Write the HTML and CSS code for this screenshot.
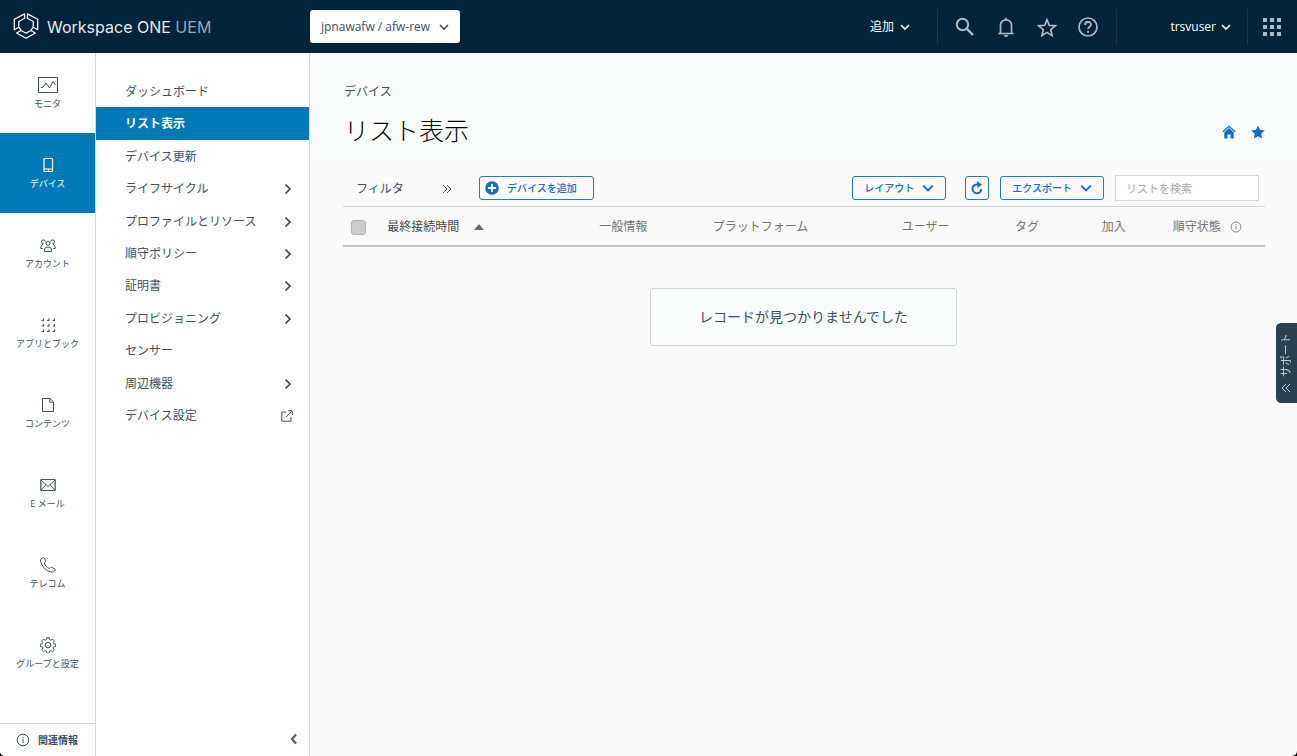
FILE: index.html
```html
<!DOCTYPE html>
<html lang="ja">
<head>
<meta charset="utf-8">
<meta name="viewport" content="width=device-width, initial-scale=1">
<title>Workspace ONE UEM</title>
<link rel="stylesheet" href="styles.css">
</head>
<body>
<svg class="defs" aria-hidden="true">
  <symbol id="down" viewBox="0 0 10 10"><path d="M1 3l4 4 4-4" fill="none" stroke="currentColor" stroke-width="1.6"/></symbol>
  <symbol id="right" viewBox="0 0 10 12"><path d="M2.5 1.5L7 6l-4.500 4.500" fill="none" stroke="currentColor" stroke-width="1.600"/></symbol>
  <symbol id="info" viewBox="0 0 14 14"><g fill="none" stroke="currentColor"><circle cx="7" cy="7" r="5.800"/><path d="M7 6v4M7 4v1.100"/></g></symbol>
</svg>
<div class="app">
  <header class="topbar">
    <a class="brand" href="#">
      <svg class="brand-mark" viewBox="0 0 26 28" fill="none" stroke="currentColor" stroke-width="1.200" stroke-linejoin="round">
        <path d="M11.600.9L1.300 6.300v10.500l4.500-2.600V8.600l5.800-3.400zM14.400.9l10.300 5.400v10.500l-4.500-2.600V8.600l-5.800-3.400z"/>
        <path d="M3.600 20l4.600-2.600L13 20.200l4.800-2.800 4.600 2.600L13 25.300zM5.800 14.200l2.400 3.200M20.200 14.200l-2.400 3.200"/>
      </svg>
      <span class="brand-name">Workspace ONE <span class="brand-product">UEM</span></span>
    </a>
    <button class="org" type="button" aria-haspopup="true">jpnawafw / afw-rew <svg class="caret"><use href="#down"/></svg></button>
    <div class="top-actions">
      <button class="top-menu add" type="button" aria-haspopup="true">追加 <svg class="caret"><use href="#down"/></svg></button>
      <div class="top-icons">
        <button type="button" aria-label="検索"><svg viewBox="0 0 20 20" fill="none" stroke="currentColor" stroke-width="2"><circle cx="7.500" cy="7.500" r="5.700"/><path d="M11.700 11.700l6.300 6.300" stroke-width="2.400"/></svg></button>
        <button type="button" aria-label="通知"><svg viewBox="0 0 20 20" fill="none" stroke="currentColor" stroke-width="1.700"><path d="M2.300 16.500h15.400M4.500 16V8.500C4.500 5 7 2.800 10 2.800s5.500 2.200 5.500 5.700V16M10 .8v2"/><path d="M8.500 18a1.600 1.600 0 0 0 3 0" fill="currentColor"/></svg></button>
        <button type="button" aria-label="お気に入り"><svg viewBox="0 0 20 20" fill="none" stroke="currentColor" stroke-width="1.700"><path d="M10 2.700l2.300 5.600 6 .5-4.600 3.900 1.400 5.900-5.100-3.200-5.100 3.200 1.400-5.900-4.600-3.900 6-.5z"/></svg></button>
        <button type="button" aria-label="ヘルプ"><svg viewBox="0 0 20 20" fill="none" stroke="currentColor" stroke-width="1.700"><circle cx="10" cy="10" r="9"/><path d="M7 8c0-4 6-3.900 6-.4 0 2.100-2.900 2.200-2.900 4.400M10.100 13.800v2" stroke-width="1.800"/></svg></button>
      </div>
      <button class="top-menu user" type="button" aria-haspopup="true">trsvuser <svg class="caret"><use href="#down"/></svg></button>
      <button class="apps" type="button" aria-label="アプリ一覧"><svg viewBox="0 0 18 18" fill="currentColor"><path d="M0 0h4v4H0zM7 0h4v4H7zM14 0h4v4h-4zM0 7h4v4H0zM7 7h4v4H7zM14 7h4v4h-4zM0 14h4v4H0zM7 14h4v4H7zM14 14h4v4h-4z"/></svg></button>
    </div>
  </header>
  <div class="body">
    <nav class="rail" aria-label="メイン">
      <a class="rail-item" href="#"><svg class="wide" viewBox="0 0 20 16" fill="none" stroke="currentColor"><rect x=".5" y=".5" width="19" height="15" rx=".8" stroke-width="1.200"/><path d="M3 10.500h1.800L8 6l3.500 5L15 4.500l2.500 3.500"/></svg>モニタ</a>
      <a class="rail-item active" href="#" aria-current="true"><svg viewBox="0 0 16 16" fill="none" stroke="currentColor"><rect x="4" y="1.500" width="8.500" height="13" rx=".8" stroke-width="1.200"/><path d="M4 12h8.500M8.250 12v2"/></svg>デバイス</a>
      <a class="rail-item" href="#"><svg viewBox="0 0 16 16" fill="none" stroke="currentColor"><circle cx="8" cy="6.500" r="2"/><path d="M4.500 14.500v-2.300C4.500 9.400 11.500 9.400 11.500 12.200v2.300zM5.300 4.500A1.900 1.900 0 1 0 3.800 6.700M10.700 4.500a1.900 1.900 0 1 1 1.500 2.200M3 7.500C1.300 8 .8 9 .8 11.500h2M13 7.500c1.700.5 2.200 1.500 2.200 4h-2"/></svg>アカウント</a>
      <a class="rail-item" href="#"><svg viewBox="0 0 16 16" fill="none" stroke="currentColor" stroke-width="1.200"><path d="M1.500 3.500h2v-2M7 3.500h2v-2M12.500 3.500h2v-2M1.500 9h2V7M7 9h2V7M12.500 9h2V7M1.500 14.500h2v-2M7 14.500h2v-2M12.500 14.500h2v-2"/></svg>アプリとブック</a>
      <a class="rail-item" href="#"><svg viewBox="0 0 16 16" fill="none" stroke="currentColor" stroke-linejoin="round"><path d="M2.500 1.500h7.700l3.300 3.300v9.700h-11zM9.800 1.500v3.700h3.700"/></svg>コンテンツ</a>
      <a class="rail-item" href="#"><svg viewBox="0 0 16 16" fill="none" stroke="currentColor"><rect x=".8" y="2.500" width="14.400" height="11" rx=".5" stroke-width="1.200"/><path d="M1 3l7 6.500L15 3M1 13l4.800-5M15 13l-4.800-5"/></svg>E メール</a>
      <a class="rail-item" href="#"><svg viewBox="0 0 16 16" fill="none" stroke="currentColor" stroke-linejoin="round"><path d="M1 1.800L3 .7c.5-.2 1 0 1.200.4l1.300 2.700c.2.500.1 1-.3 1.300l-1 .9c.6 2.300 2.800 4.700 5.300 5.500l1-1c.4-.4.800-.4 1.300-.2l2.800 1.500c.6.300.6.800.4 1.200-.7 1.700-2.200 2.400-4 2C5.500 13.700 1.500 9 .6 4.200.5 3.200.4 2.300 1 1.800z"/></svg>テレコム</a>
      <a class="rail-item" href="#"><svg viewBox="0 0 16 16" fill="none" stroke="currentColor" stroke-linejoin="round"><circle cx="8" cy="8" r="2.800"/><path d="M6.800.7h2.400l.5 2 1.100.5 1.800-1.100 1.700 1.700-1.100 1.800.5 1.100 1.900.5v2.400l-1.900.5-.5 1.100 1.100 1.800-1.700 1.700-1.800-1.100-1.100.5-.5 1.900H6.800l-.5-1.900-1.100-.5-1.800 1.100-1.700-1.700 1.100-1.800-.5-1.100-1.900-.5V7.200l1.900-.5.500-1.100-1.100-1.800 1.700-1.700 1.800 1.100 1.100-.5z"/></svg>グループと設定</a>
      <a class="about" href="#"><svg><use href="#info"/></svg>関連情報</a>
    </nav>
    <nav class="subnav" aria-label="デバイス">
      <ul class="subnav-list">
        <li><a href="#">ダッシュボード</a></li>
        <li><a class="current" href="#" aria-current="page">リスト表示</a></li>
        <li><a href="#">デバイス更新</a></li>
        <li><a href="#">ライフサイクル<svg class="arrow"><use href="#right"/></svg></a></li>
        <li><a href="#">プロファイルとリソース<svg class="arrow"><use href="#right"/></svg></a></li>
        <li><a href="#">順守ポリシー<svg class="arrow"><use href="#right"/></svg></a></li>
        <li><a href="#">証明書<svg class="arrow"><use href="#right"/></svg></a></li>
        <li><a href="#">プロビジョニング<svg class="arrow"><use href="#right"/></svg></a></li>
        <li><a href="#">センサー</a></li>
        <li><a href="#">周辺機器<svg class="arrow"><use href="#right"/></svg></a></li>
        <li><a href="#">デバイス設定<svg class="external" viewBox="0 0 12 12" fill="none" stroke="currentColor"><path d="M5 2H.8v9.200H10V7M7 .8h4.200V5M11 1L5 7"/></svg></a></li>
      </ul>
      <button class="collapse" type="button" aria-label="メニューを閉じる"><svg viewBox="0 0 8 12"><path d="M6 1.500L2 6l4 4.500" fill="none" stroke="currentColor" stroke-width="2.200"/></svg></button>
    </nav>
    <main class="main">
      <div class="page-head">
        <a class="crumb" href="#">デバイス</a>
        <div class="title-row">
          <h1>リスト表示</h1>
          <div class="title-icons">
            <button type="button" aria-label="ホームに設定"><svg viewBox="0 0 14 14"><path d="M2.300 7.200L7 3l4.700 4.200v6.300H8.500v-4h-3v4H2.300z" fill="currentColor"/><path d="M.8 6.700L7 1.200l6.200 5.500" fill="none" stroke="currentColor" stroke-width="1.200"/></svg></button>
            <button type="button" aria-label="お気に入りに追加"><svg viewBox="0 0 14 14"><path d="M7 .4l2 4.400 4.800.6-3.600 3.300 1 4.900L7 11.200l-4.200 2.400 1-4.900L.2 5.400 5 4.800z" fill="currentColor"/></svg></button>
          </div>
        </div>
      </div>
      <div class="toolbar">
        <button class="filter" type="button">フィルタ<svg viewBox="0 0 10 10" fill="none" stroke="currentColor"><path d="M1 1l4 4-4 4M5 1l4 4-4 4"/></svg></button>
        <button class="btn add-device" type="button"><svg class="plus" viewBox="0 0 14 14"><circle cx="7" cy="7" r="6.800" fill="currentColor"/><path d="M7 3v8M3 7h8" stroke="#fff" stroke-width="1.800"/></svg>デバイスを追加</button>
        <div class="tools">
          <button class="btn layout" type="button" aria-haspopup="true">レイアウト<svg><use href="#down"/></svg></button>
          <button class="btn refresh" type="button" aria-label="更新"><svg viewBox="0 0 12 14"><path d="M10.300 8A4.400 4.400 0 1 1 7 3.600" fill="none" stroke="currentColor" stroke-width="2"/><path d="M6 .3l5 3.300-4.500 3.500z" fill="currentColor"/></svg></button>
          <button class="btn" type="button" aria-haspopup="true">エクスポート<svg><use href="#down"/></svg></button>
          <input class="search" type="search" placeholder="リストを検索" aria-label="リストを検索">
        </div>
      </div>
      <table class="grid">
        <colgroup><col class="c-check"><col class="c-seen"><col class="c-general"><col class="c-platform"><col class="c-user"><col class="c-tag"><col class="c-enroll"><col class="c-state"></colgroup>
        <thead>
          <tr>
            <th><input class="check" type="checkbox" disabled aria-label="すべて選択"></th>
            <th class="sorted" aria-sort="ascending">最終接続時間<svg class="sort" viewBox="0 0 10 6"><path d="M5 0l5 6H0z" fill="currentColor"/></svg></th>
            <th>一般情報</th>
            <th>プラットフォーム</th>
            <th>ユーザー</th>
            <th>タグ</th>
            <th>加入</th>
            <th>順守状態<svg class="hint"><use href="#info"/></svg></th>
          </tr>
        </thead>
      </table>
      <p class="empty">レコードが見つかりませんでした</p>
    </main>
  </div>
  <button class="support" type="button"><svg viewBox="0 0 10 10" fill="none" stroke="currentColor"><path d="M1 1l4 4-4 4M5 1l4 4-4 4"/></svg>サポート</button>
</div>
</body>
</html>
```
FILE: styles.css
```css
* { box-sizing: border-box; }
html { background: #000; }
body {
  margin: 0;
  color: #414f60;
  font-family: "Open Sans", "Noto Sans CJK JP", sans-serif;
  font-size: 12px;
  line-height: 20px;
}
a { color: inherit; text-decoration: none; }
button, input { font: inherit; color: inherit; }
button {
  display: flex;
  align-items: center;
  padding: 0;
  border: 0;
  background: none;
  cursor: pointer;
}
svg { display: block; flex: none; }
.defs { position: absolute; width: 0; height: 0; }
.caret { width: 10px; height: 10px; }

.app {
  display: flex;
  flex-direction: column;
  min-height: 100vh;
  overflow: hidden;
  border-radius: 0 0 5px 5px;
  background: #fafafa;
}

/* Top bar */
.topbar {
  display: flex;
  align-items: center;
  height: 53px;
  background: #002538;
  color: #fff;
}
.brand {
  display: flex;
  align-items: center;
  gap: 8px;
  width: 310px;
  padding-left: 13px;
}
.brand-mark { width: 26px; height: 28px; }
.brand-name { font-family: Inter, sans-serif; font-size: 16px; color: #e6ebee; }
.brand-product { color: #98a7b0; }
.org {
  gap: 9px;
  height: 33px;
  padding: 0 11px;
  border-radius: 3px;
  background: #fff;
  color: #414f60;
}
.top-actions { display: flex; align-items: center; height: 36px; margin-left: auto; }
.top-actions > * { height: 100%; }
.top-menu { gap: 5px; }
.add { gap: 6px; padding-right: 27px; }
.top-icons {
  display: flex;
  gap: 21px;
  padding: 0 18px 0 17px;
  border: solid #17384a;
  border-width: 0 1px;
  color: #adbbc4;
}
.top-icons svg { width: 20px; height: 20px; }
.user { justify-content: flex-end; width: 130px; padding-right: 16px; }
.apps { padding: 0 16px 0 15px; border-left: 1px solid #17384a; color: #adbbc4; }
.apps svg { width: 18px; height: 18px; }

.body { display: flex; flex: 1; }

/* Main navigation */
.rail {
  display: flex;
  flex-direction: column;
  width: 96px;
  border-right: 1px solid #d7d7d7;
  background: #fff;
}
.rail-item {
  display: flex;
  flex-direction: column;
  align-items: center;
  justify-content: center;
  gap: 4px;
  height: 80px;
  padding-top: 1px;
  font-size: 9px;
  line-height: 14px;
}
.rail-item svg { width: 16px; height: 16px; }
.rail-item .wide { width: 20px; }
.active { background: #0079b8; color: #fff; }
.about {
  display: flex;
  align-items: center;
  gap: 8px;
  height: 33px;
  margin-top: auto;
  padding-left: 16px;
  border-top: 1px solid #d7d7d7;
  font-size: 10px;
  font-weight: 700;
}
.about svg { width: 14px; height: 14px; }

/* Section navigation */
.subnav {
  display: flex;
  flex-direction: column;
  width: 214px;
  padding-top: 22px;
  border-right: 1px solid #d7d7d7;
  background: #fff;
}
.subnav-list {
  display: grid;
  grid-auto-rows: 1fr;
  min-height: 357px;
  margin: 0;
  padding: 0;
  list-style: none;
}
.subnav-list a {
  display: flex;
  align-items: center;
  justify-content: space-between;
  height: 100%;
  padding: 1px 16px 0 29px;
}
.subnav-list .current { background: #0079b8; color: #fff; font-weight: 700; }
.arrow { width: 10px; height: 12px; color: #314351; }
.external { width: 12px; height: 12px; }
.collapse { margin: auto 11px 11px auto; color: #565f69; }
.collapse svg { width: 8px; height: 12px; }

/* Page */
.main { flex: 1; min-width: 0; }
.page-head { padding: 29px 32px 12px 34px; background: #fafcfc; }
.crumb { display: block; line-height: 20px; }
.title-row { display: flex; align-items: center; justify-content: space-between; margin-top: 10px; }
h1 { margin: 0; color: #000; font-size: 25px; font-weight: 300; line-height: 36px; }
.title-icons { display: flex; gap: 15px; padding-top: 3px; color: #0f6ecd; }
.title-icons svg { width: 14px; height: 14px; }

.toolbar {
  display: flex;
  align-items: center;
  height: 47px;
  margin: 0 32px 0 33px;
  padding: 10px 6px 0 13px;
  border-bottom: 1px solid #ccd5db;
}
.filter { justify-content: space-between; width: 96px; margin-right: 27px; padding-top: 2px; }
.filter svg { width: 10px; height: 10px; }
.btn {
  gap: 8px;
  height: 24px;
  padding: 0 11px;
  border: 1px solid #2179d2;
  border-radius: 3px;
  color: #0f6ecd;
  font-size: 10px;
  font-weight: 500;
  white-space: nowrap;
}
.btn svg { width: 12px; height: 12px; }
.add-device { padding: 0 16px 0 5px; }
.btn .plus { width: 14px; height: 14px; }
.tools { display: flex; align-items: center; gap: 11px; margin-left: auto; }
.layout { margin-right: 8px; }
.refresh { padding: 0 5px; }
.refresh svg { height: 14px; }
.search {
  width: 144px;
  height: 26px;
  padding: 0 10px;
  border: 1px solid #d7d7d7;
  border-radius: 0;
  background: #fff;
  font-size: 11px;
}
.search::placeholder { color: #a6a6a6; }

.grid {
  width: calc(100% - 65px);
  margin: 0 32px 0 33px;
  border-collapse: collapse;
  table-layout: fixed;
  border-bottom: 2px solid #c4c4c4;
}
.c-check { width: 4.800%; }
.c-seen { width: 23%; }
.c-general { width: 12.300%; }
.c-platform { width: 20.500%; }
.c-user { width: 12.300%; }
.c-tag { width: 9.400%; }
.c-enroll { width: 7.700%; }
th {
  height: 39px;
  padding: 1px 0 0;
  color: #737373;
  font-weight: 400;
  text-align: left;
  white-space: nowrap;
}
th svg { display: inline-block; }
.sorted { color: #4a4a4a; }
.sort { width: 10px; height: 6px; margin-left: 15px; vertical-align: 1px; color: #6a6a6a; }
.hint { width: 12px; height: 12px; margin-left: 9px; vertical-align: -2px; }
.check {
  display: block;
  width: 15px;
  height: 15px;
  margin: 1px 0 0 8px;
  appearance: none;
  border: 1px solid #b5b5b5;
  border-radius: 3px;
  background: #ccc;
}
.empty {
  width: fit-content;
  margin: 41px auto 0;
  padding: 18px 48px;
  border: 1px solid #c9d3da;
  border-radius: 3px;
  background: #fafcfc;
  font-size: 14px;
}

.support {
  position: fixed;
  right: 0;
  top: 323px;
  justify-content: center;
  gap: 6px;
  width: 21px;
  height: 80px;
  border-radius: 0 5px 5px 0;
  background: #2b4150;
  color: #c3ccd3;
  font-size: 11px;
  writing-mode: vertical-rl;
  text-orientation: sideways;
  transform: rotate(180deg);
}
.support svg { width: 10px; height: 10px; }
```
